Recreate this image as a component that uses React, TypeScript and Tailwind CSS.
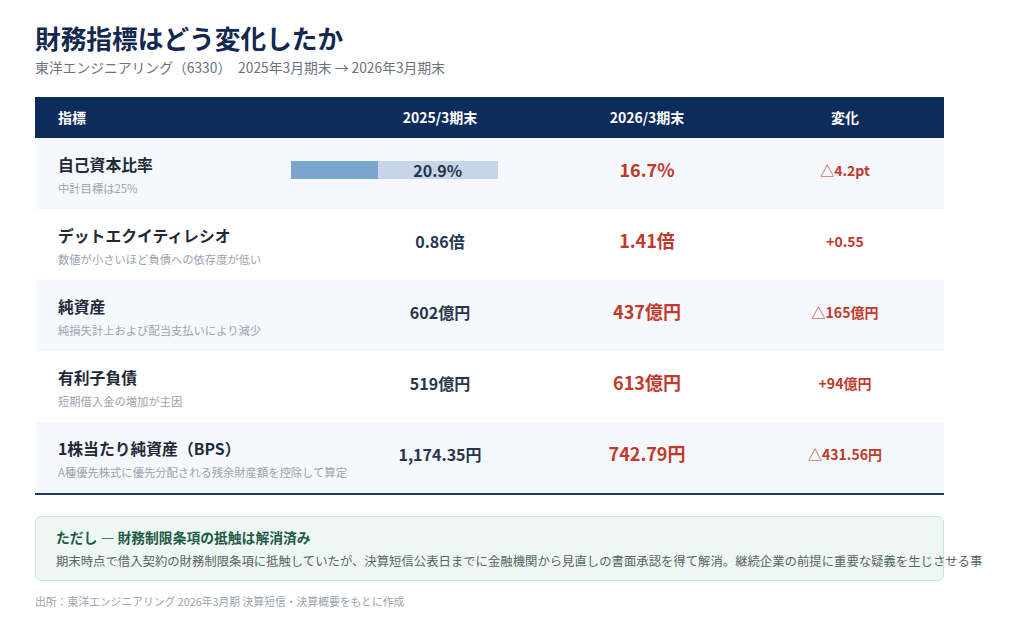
type Row = {
  label: string;
  note: string;
  prev: string;
  curr: string;
  delta: string;
  bar?: number;
};

const rows: Row[] = [
  { label: "自己資本比率", note: "中計目標は25%", prev: "20.9%", curr: "16.7%", delta: "△4.2pt", bar: 20.9 },
  { label: "デットエクイティレシオ", note: "数値が小さいほど負債への依存度が低い", prev: "0.86倍", curr: "1.41倍", delta: "+0.55" },
  { label: "純資産", note: "純損失計上および配当支払いにより減少", prev: "602億円", curr: "437億円", delta: "△165億円" },
  { label: "有利子負債", note: "短期借入金の増加が主因", prev: "519億円", curr: "613億円", delta: "+94億円" },
  { label: "1株当たり純資産（BPS）", note: "A種優先株式に優先分配される残余財産額を控除して算定", prev: "1,174.35円", curr: "742.79円", delta: "△431.56円" },
];

function Delta({ text }: { text: string }) {
  if (text.startsWith("△")) {
    return (
      <span>
        <span className="font-normal">△</span>
        {text.slice(1)}
      </span>
    );
  }
  return <span>{text}</span>;
}

export default function App() {
  return (
    <div
      className="min-h-[630px] w-[1024px] overflow-hidden bg-white px-[35px] pt-[20px]"
      style={{ fontFamily: '"Noto Sans CJK JP", "Noto Sans", sans-serif' }}
    >
      <h1 className="text-[25.7px] font-bold leading-[36px] text-[#12284f]">財務指標はどう変化したか</h1>
      <p className="mt-[1px] text-[13.8px] leading-[20px] text-[#6b7280]">
        東洋エンジニアリング（6330）　2025年3月期末 → 2026年3月期末
      </p>

      <div className="mt-[20px] w-[909px] border-b-2 border-[#1e3a66]">
        <div className="grid h-[41px] grid-cols-[297px_216px_198px_198px] items-center bg-[#0c2c5c] text-[14px] font-bold text-white">
          <div className="pl-[23px]">指標</div>
          <div className="text-center">2025/3期末</div>
          <div className="text-center">2026/3期末</div>
          <div className="text-center">変化</div>
        </div>
        {rows.map((r, i) => (
          <div
            key={r.label}
            className={`grid h-[71px] grid-cols-[297px_216px_198px_198px] items-center ${
              i % 2 === 0 ? "bg-[#f5f8fc]" : "bg-white"
            }`}
          >
            <div className="pl-[23px] pt-[2px]">
              <div className="whitespace-nowrap text-[15.8px] font-bold leading-[22px] text-[#1f2937]">{r.label}</div>
              <div className="mt-[4px] whitespace-nowrap text-[11.3px] leading-[16px] text-[#9ca3af]">{r.note}</div>
            </div>
            {r.bar !== undefined ? (
              <div className="flex pb-[8px]">
                <div className="ml-[-41px] flex h-[18px] w-[207px] bg-[#c6d5e7]">
                  <div className="h-full bg-[#7ba7cf]" style={{ width: `${(r.bar / 50) * 100}%` }} />
                  <div className="flex flex-1 items-center justify-center text-[16px] font-bold text-[#27354d]">
                    {r.prev}
                  </div>
                </div>
              </div>
            ) : (
              <div className="pb-[8px] text-center text-[16px] font-bold text-[#27354d]">{r.prev}</div>
            )}
            <div className="pb-[8px] text-center text-[18px] font-bold text-[#c0392b]">{r.curr}</div>
            <div className="pb-[6px] text-center text-[14px] font-bold text-[#c0392b]">
              <Delta text={r.delta} />
            </div>
          </div>
        ))}
      </div>

      <div className="mt-[21px] h-[65px] w-[909px] rounded-[6px] border border-[#c9e6da] bg-[#eef7f3] px-[20px] pt-[10px]">
        <div className="text-[13.8px] font-bold leading-[20px] text-[#1e5a48]">ただし ― 財務制限条項の抵触は解消済み</div>
        <div className="mt-[4px] whitespace-nowrap text-[12.37px] leading-[20px] text-[#56655f]">
          期末時点で借入契約の財務制限条項に抵触していたが、決算短信公表日までに金融機関から見直しの書面承認を得て解消。継続企業の前提に重要な疑義を生じさせる事
        </div>
      </div>

      <p className="mt-[12px] text-[10.8px] leading-[16px] text-[#9ca3af]">
        出所：東洋エンジニアリング 2026年3月期 決算短信・決算概要をもとに作成
      </p>
    </div>
  );
}
